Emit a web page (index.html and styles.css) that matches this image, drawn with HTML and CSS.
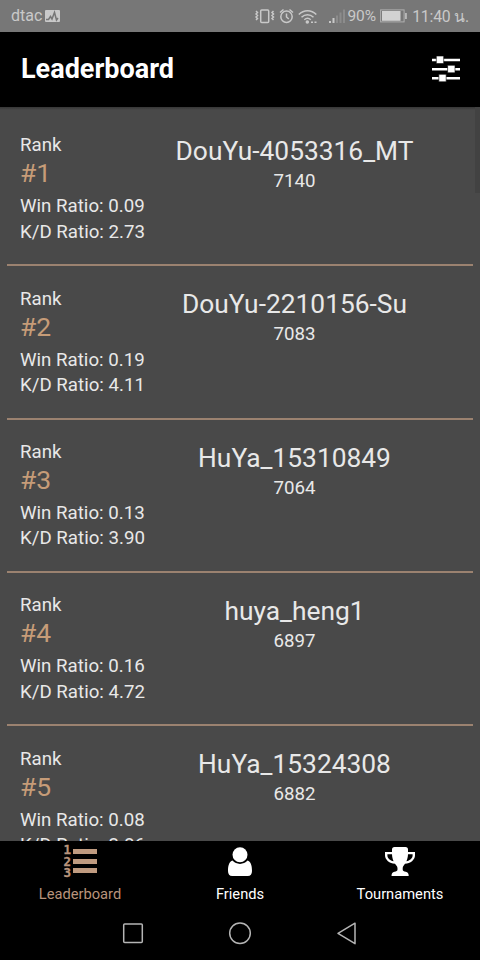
FILE: index.html
```
<!DOCTYPE html>
<html lang="en">
<head>
  <meta charset="UTF-8">
  <meta name="viewport" content="width=device-width, initial-scale=1.0">
  <title>Leaderboard</title>
  <link rel="stylesheet" href="styles.css">
</head>
<body>

  <!-- Status bar -->
  <div class="status">
    <span class="carrier">dtac</span>
    <svg class="pulse" width="15" height="12" viewBox="0 0 15 12">
      <rect width="15" height="12" rx="1" fill="#c9c9c9"/>
      <path d="M1 9.500h2.500l2-3 1.500 2.500 2.500-6.500 2 7.500 1.500-2" fill="none" stroke="#777" stroke-width="1.500"/>
    </svg>
    <svg class="status-icons" width="90" height="18" viewBox="0 0 90 18" fill="none" stroke="#c9c9c9" stroke-width="1.500">
      <!-- vibrate -->
      <rect x="5.700" y="3" width="8" height="12.500" rx="1"/>
      <path d="M1 4l1.500 1.500L1 7l1.500 1.500L1 10l1.500 1.500L1 13M18.500 4L17 5.500 18.500 7 17 8.500l1.500 1.500-1.500 1.500 1.500 1.500"/>
      <!-- alarm -->
      <circle cx="31.500" cy="9.700" r="5.700"/>
      <path d="M31.500 6.500v3.500l2.300 2M25 5.500l3.500-3M38 5.500l-3.500-3"/>
      <!-- wifi -->
      <path d="M43.800 7.500c5-5 12.500-5 17.500 0M46.500 10.200c3.500-3.300 8.500-3.300 12 0M49.300 12.800c2-1.800 4.500-1.800 6.500 0"/>
      <circle cx="52.300" cy="15" r="1" fill="#c9c9c9"/>
      <path d="M56 15.200h2M59.500 15.200h2"/>
      <!-- signal -->
      <g stroke-width="2">
        <path d="M75 16v-2M78.500 16v-5"/>
        <path d="M82 16V8.500M85.500 16V5.500M89 16V2.500" stroke="#8c8c8c"/>
      </g>
    </svg>
    <span class="percent">90%</span>
    <svg class="battery" width="27" height="14" viewBox="0 0 27 14">
      <rect x=".6" y=".9" width="23.500" height="12" fill="none" stroke="#b0b0b0"/>
      <rect x="2" y="2" width="18.500" height="9.800" fill="#d2d2d2"/>
      <rect x="25.200" y="4" width="1.500" height="6" fill="#c9c9c9"/>
    </svg>
    <span class="time">11:40 น.</span>
  </div>

  <!-- Header -->
  <div class="header">
    <h1>Leaderboard</h1>
    <svg class="filter" width="28" height="26" viewBox="0 0 28 26" fill="#fff">
      <path d="M0 2.700h28v2.600H0zM0 11.900h28v2.600H0zM0 21h28v2.600H0z"/>
      <path d="M4.300 0h7.400v7.600H4.300zM15.600 9.300H23v7.500h-7.400zM6.800 18.300h7.400v7.500H6.800z" stroke="#000" stroke-width=".6"/>
    </svg>
  </div>

  <!-- Players -->
  <div class="list">
    <div class="row">
      <div class="stats">
        <p>Rank</p>
        <p class="rank">#1</p>
        <p>Win Ratio: 0.09</p>
        <p>K/D Ratio: 2.73</p>
      </div>
      <div class="player">
        <p class="name">DouYu-4053316_MT</p>
        <p>7140</p>
      </div>
    </div>
    <div class="row">
      <div class="stats">
        <p>Rank</p>
        <p class="rank">#2</p>
        <p>Win Ratio: 0.19</p>
        <p>K/D Ratio: 4.11</p>
      </div>
      <div class="player">
        <p class="name">DouYu-2210156-Su</p>
        <p>7083</p>
      </div>
    </div>
    <div class="row">
      <div class="stats">
        <p>Rank</p>
        <p class="rank">#3</p>
        <p>Win Ratio: 0.13</p>
        <p>K/D Ratio: 3.90</p>
      </div>
      <div class="player">
        <p class="name">HuYa_15310849</p>
        <p>7064</p>
      </div>
    </div>
    <div class="row">
      <div class="stats">
        <p>Rank</p>
        <p class="rank">#4</p>
        <p>Win Ratio: 0.16</p>
        <p>K/D Ratio: 4.72</p>
      </div>
      <div class="player">
        <p class="name">huya_heng1</p>
        <p>6897</p>
      </div>
    </div>
    <div class="row">
      <div class="stats">
        <p>Rank</p>
        <p class="rank">#5</p>
        <p>Win Ratio: 0.08</p>
        <p>K/D Ratio: 3.86</p>
      </div>
      <div class="player">
        <p class="name">HuYa_15324308</p>
        <p>6882</p>
      </div>
    </div>
    <div class="scrollbar"></div>
  </div>

  <!-- Tabs -->
  <div class="tabs">
    <a class="tab active">
      <span class="tab-icon numbered">
        <span class="digits"><b>1</b><b>2</b><b>3</b></span>
        <span class="bars"><i></i><i></i><i></i></span>
      </span>
      <span>Leaderboard</span>
    </a>
    <a class="tab">
      <span class="tab-icon">
        <svg width="26" height="30" viewBox="0 0 26 30" fill="#fff">
          <path d="M5.500 13.600C2.300 14.600 1 18.500 1 24c0 3 1.500 5 4.200 5h15.600c2.700 0 4.200-2 4.200-5 0-5.500-1.300-9.400-4.500-10.400-2 2.200-4.600 3.300-7.500 3.300s-5.500-1.100-7.500-3.300z"/>
          <circle cx="13" cy="7.800" r="7.500"/>
        </svg>
      </span>
      <span>Friends</span>
    </a>
    <a class="tab">
      <span class="tab-icon">
        <svg width="32" height="30" viewBox="0 0 32 30" fill="#fff">
          <path d="M8 2.500Q8 0 10.500 0h11Q24 0 24 2.500V5h7v3.200c0 4.500-4.500 8.300-10 8.600-1.300 1.700-2.300 2.500-2.300 4.700v1c0 1.500 1.300 2 3 2.200 2 .3 3 1.300 3 4.300H7.500c0-3 1-4 3-4.300 1.700-.2 3-.7 3-2.200v-1c0-2.200-1.200-3-2.500-4.700-5.500-.3-10-4.100-10-8.600V5h7z"/>
          <path d="M3.400 7.300H8c.1 2.700.7 5 1.600 6.900-3.500-.6-6.200-2.900-6.200-5.700zM28.600 7.300H24c-.1 2.700-.7 5-1.600 6.900 3.500-.6 6.200-2.900 6.200-5.700z" fill="#000"/>
        </svg>
      </span>
      <span>Tournaments</span>
    </a>
  </div>

  <!-- Android navigation -->
  <div class="sysnav">
    <svg width="22" height="24" viewBox="0 0 22 24"><rect x="1.700" y="2" width="18.600" height="18.600" rx="1"/></svg>
    <svg width="24" height="24" viewBox="0 0 24 24"><circle cx="12" cy="11.300" r="10.300"/></svg>
    <svg width="22" height="24" viewBox="0 0 22 24"><path d="M19 1.200v20.500L2 11.400z" stroke-linejoin="round"/></svg>
  </div>

</body>
</html>
```
FILE: styles.css
```
* {
  box-sizing: border-box;
}

body {
  margin: 0;
  height: 960px;
  display: flex;
  flex-direction: column;
  overflow: hidden;
  background-color: #000;
  color: #e8e8e8;
  font-family: Roboto, "Noto Sans", sans-serif;
}

p, h1 {
  margin: 0;
}

.status {
  flex: none;
  height: 32px;
  display: flex;
  align-items: center;
  padding: 0 11px;
  background-color: #777;
  color: #c9c9c9;
  font-size: 16px;
}

.carrier {
  margin-top: -2px;
}

.pulse {
  margin-left: 3px;
}

.status-icons {
  margin-left: auto;
}

.percent {
  margin-left: 2px;
  font-size: 15.500px;
}

.battery {
  margin: 0 5px 0 4px;
}

.time {
  font-size: 15.800px;
  letter-spacing: -0.200px;
  white-space: nowrap;
}

.header {
  flex: none;
  height: 74.500px;
  display: flex;
  align-items: center;
  justify-content: space-between;
  padding: 0 20px 0 21px;
}

.header h1 {
  color: #fff;
  font-size: 27px;
  font-weight: bold;
}

.list {
  position: relative;
  flex: none;
  height: 734.500px;
  padding: 6.600px 7px 0;
  overflow: hidden;
  background-color: #494949;
}

.list::before {
  content: "";
  position: absolute;
  top: 0;
  left: 0;
  right: 0;
  height: 3px;
  background: linear-gradient(#363636, #494949);
}

.row {
  height: 153.350px;
  display: flex;
  padding: 20.200px 30px 0 13px;
  border-bottom: 2px solid #9b8270;
  font-size: 18.700px;
  line-height: 25.400px;
}

.stats {
  width: 126px;
  white-space: nowrap;
}

.rank {
  margin-top: -1.500px;
  margin-bottom: 6px;
  color: #c69c78;
  font-size: 26.500px;
  line-height: 31px;
}

.player {
  flex: 1;
  padding-top: .700px;
  text-align: center;
}

.name {
  margin-bottom: 1px;
  font-size: 26.350px;
  line-height: 34px;
}

.scrollbar {
  position: absolute;
  top: 0;
  right: 0;
  width: 5px;
  height: 86px;
  background-color: #424242;
}

.tabs {
  flex: none;
  height: 66.500px;
  display: flex;
}

.tab {
  flex: 1;
  display: flex;
  flex-direction: column;
  align-items: center;
  color: #fff;
  font-size: 14.700px;
  line-height: 20px;
}

.tab.active {
  color: #b8937b;
}

.tab-icon {
  height: 37px;
  padding-top: 5.500px;
  margin-bottom: 5.500px;
}

.numbered {
  display: flex;
  gap: 1.500px;
  padding-top: 3px;
}

.digits {
  display: grid;
  grid-template-rows: repeat(3, 11.500px);
  font-family: "DejaVu Sans Mono", monospace;
  font-size: 12.500px;
  line-height: 11.500px;
}

.digits b {
  -webkit-text-stroke: 0.300px #c09b80;
}

.bars {
  display: flex;
  flex-direction: column;
  gap: 4.500px;
  padding-top: 5px;
}

.bars i {
  width: 24px;
  height: 5px;
  background-color: #c09b80;
}

.sysnav {
  flex: 1;
  display: flex;
  align-items: center;
  justify-content: center;
  gap: 84px;
}

.sysnav svg {
  fill: none;
  stroke: #b5b5b5;
  stroke-width: 1.500;
}
```
